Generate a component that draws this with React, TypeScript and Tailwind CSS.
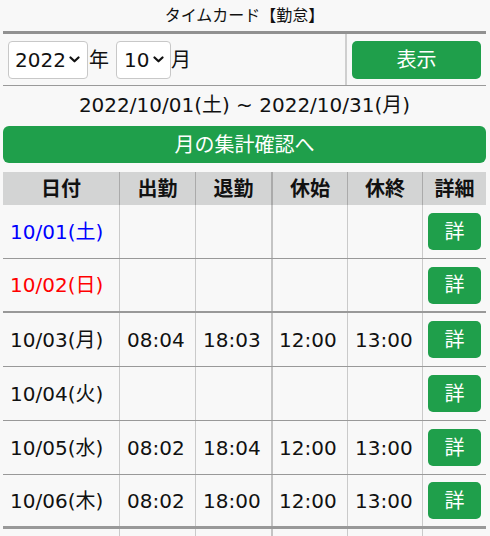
import React from "react";

const FONT = { fontFamily: '"DejaVu Sans", "Noto Sans CJK JP", sans-serif' };

type Row = { d: string; c?: "blue" | "red"; t?: [string, string, string, string]; border: string };

const rows: Row[] = [
  { d: "10/01(土)", c: "blue", border: "border-b border-[#999]" },
  { d: "10/02(日)", c: "red", border: "border-b-2 border-[#999]" },
  { d: "10/03(月)", t: ["08:04", "18:03", "12:00", "13:00"], border: "border-b border-[#999]" },
  { d: "10/04(火)", border: "border-b border-[#999]" },
  { d: "10/05(水)", t: ["08:02", "18:04", "12:00", "13:00"], border: "border-b border-[#999]" },
  { d: "10/06(木)", t: ["08:02", "18:00", "12:00", "13:00"], border: "border-b-[3px] border-[#999]" },
];

function Chevron() {
  return (
    <svg width="11" height="7" viewBox="0 0 11 7" className="shrink-0">
      <path d="M1.5 1.5 L5.5 5.3 L9.5 1.5" fill="none" stroke="#111" strokeWidth="2.2" strokeLinecap="round" strokeLinejoin="round" />
    </svg>
  );
}

export default function App() {
  return (
    <div className="min-h-screen bg-[#f8f8f8] text-[#111]" style={FONT}>
      <div className="mx-[3px] w-[483px]">
        <div className="h-[31px] flex items-center justify-center text-[16px]">タイムカード【勤怠】</div>
        <div className="h-[3px] bg-[#919191]" />
        <div className="flex h-[52px] border-b border-[#9a9a9a]">
          <div className="w-[342px] flex items-center pl-[5px] text-[20px]">
            <div className="h-[38px] w-[80px] bg-white border border-[#c8c8c8] rounded-[4px] flex items-center pl-[6px] pr-[7px] justify-between">
              <span>2022</span>
              <Chevron />
            </div>
            <span className="ml-[1px]">年</span>
            <div className="ml-[7px] h-[38px] w-[55px] bg-white border border-[#c8c8c8] rounded-[4px] flex items-center pl-[7px] pr-[6px] justify-between">
              <span>10</span>
              <Chevron />
            </div>
            <span>月</span>
          </div>
          <div className="w-[2px] bg-[#cfcfcf]" />
          <div className="flex-1 flex items-center pl-[5px] pr-[5px]">
            <div className="h-[38px] w-full bg-[#1f9f4b] rounded-[5px] text-white text-[20px] flex items-center justify-center">表示</div>
          </div>
        </div>
        <div className="h-[38px] flex items-center justify-center text-[20px]">2022/10/01(土) ~ 2022/10/31(月)</div>
        <div className="mt-[2px] h-[37px] bg-[#1f9f4b] rounded-[6px] text-white text-[20px] flex items-center justify-center">月の集計確認へ</div>
        <div className="mt-[9px]">
          <div className="grid grid-cols-[116px_76px_76px_76px_75px_1fr] h-[33px] bg-[#d3d4d4] font-bold text-[20px]">
            <div className="flex items-center justify-center">日付</div>
            <div className="flex items-center justify-center border-l border-[#aaa]">出勤</div>
            <div className="flex items-center justify-center border-l border-[#aaa]">退勤</div>
            <div className="flex items-center justify-center border-l-2 border-[#aaa]">休始</div>
            <div className="flex items-center justify-center border-l border-[#aaa]">休終</div>
            <div className="flex items-center justify-center border-l border-[#aaa]">詳細</div>
          </div>
          {rows.map((r) => (
            <div key={r.d} className={`grid grid-cols-[116px_76px_76px_76px_75px_1fr] h-[54px] text-[20px] ${r.border}`}>
              <div
                className={`flex items-center pl-[7px] ${
                  r.c === "blue" ? "text-[#0000ff]" : r.c === "red" ? "text-[#ff0000]" : ""
                }`}
              >
                {r.d}
              </div>
              <div className="flex items-center pl-[7px] border-l border-[#cacaca]">{r.t?.[0]}</div>
              <div className="flex items-center pl-[7px] border-l border-[#cacaca]">{r.t?.[1]}</div>
              <div className="flex items-center pl-[6px] border-l-2 border-[#c4c4c4]">{r.t?.[2]}</div>
              <div className="flex items-center pl-[7px] border-l border-[#cacaca]">{r.t?.[3]}</div>
              <div className="flex items-center justify-center border-l border-[#cacaca]">
                <div className="h-[37px] w-[53px] bg-[#1f9f4b] rounded-[5px] text-white flex items-center justify-center">詳</div>
              </div>
            </div>
          ))}
          <div className="grid grid-cols-[116px_76px_76px_76px_75px_1fr] h-[8px]">
            <div />
            <div className="border-l border-[#cacaca]" />
            <div className="border-l border-[#cacaca]" />
            <div className="border-l-2 border-[#c4c4c4]" />
            <div className="border-l border-[#cacaca]" />
            <div className="border-l border-[#cacaca]" />
          </div>
        </div>
      </div>
    </div>
  );
}
